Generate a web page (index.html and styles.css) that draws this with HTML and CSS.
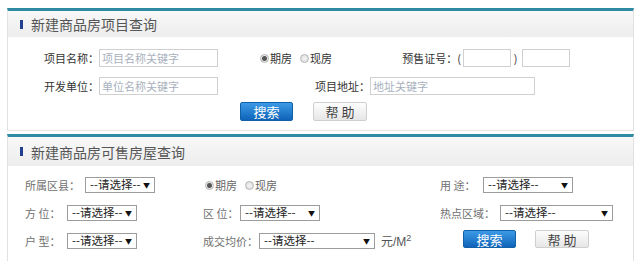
FILE: index.html
```html
<!DOCTYPE html>
<html lang="zh-CN">
<head>
    <meta charset="UTF-8">
    <title>新建商品房查询</title>
    <link rel="stylesheet" href="styles.css">
</head>
<body>
    <!-- 新建商品房项目查询 -->
    <section class="panel panel-project">
        <h2 class="panel-title"><span class="marker"></span>新建商品房项目查询</h2>
        <div class="panel-body">
            <div class="row">
                <span class="lbl lbl-a">项目名称：</span>
                <input class="txt txt-a" type="text" placeholder="项目名称关键字">
                <span class="radios radios-a">
                    <span class="radio checked"></span>期房
                    <span class="radio"></span>现房
                </span>
                <span class="lbl lbl-b">预售证号：(</span>
                <input class="txt txt-s" type="text">
                <span class="paren">)</span>
                <input class="txt txt-s" type="text">
            </div>
            <div class="row">
                <span class="lbl lbl-a">开发单位：</span>
                <input class="txt txt-a" type="text" placeholder="单位名称关键字">
                <span class="lbl lbl-c">项目地址：</span>
                <input class="txt txt-addr" type="text" placeholder="地址关键字">
            </div>
            <div class="row row-btn">
                <button class="btn btn-search">搜索</button>
                <button class="btn btn-help">帮 助</button>
            </div>
        </div>
    </section>

    <!-- 新建商品房可售房屋查询 -->
    <section class="panel panel-house">
        <h2 class="panel-title"><span class="marker"></span>新建商品房可售房屋查询</h2>
        <div class="panel-body grid">
            <div class="cell">
                <span class="glbl w60">所属区县：</span>
                <span class="sel w70">--请选择--<i>▼</i></span>
            </div>
            <div class="cell">
                <span class="radios radios-b">
                    <span class="radio checked"></span>期房
                    <span class="radio"></span>现房
                </span>
            </div>
            <div class="cell">
                <span class="glbl w43">用 途：</span>
                <span class="sel w90">--请选择--<i>▼</i></span>
            </div>

            <div class="cell">
                <span class="glbl w42">方 位：</span>
                <span class="sel w70">--请选择--<i>▼</i></span>
            </div>
            <div class="cell">
                <span class="glbl w37">区 位：</span>
                <span class="sel w80">--请选择--<i>▼</i></span>
            </div>
            <div class="cell">
                <span class="glbl w60">热点区域：</span>
                <span class="sel w113">--请选择--<i>▼</i></span>
            </div>

            <div class="cell">
                <span class="glbl w42">户 型：</span>
                <span class="sel w70">--请选择--<i>▼</i></span>
            </div>
            <div class="cell">
                <span class="glbl w56">成交均价：</span>
                <span class="sel w116">--请选择--<i>▼</i></span>
                <span class="unit">元/M<sup>2</sup></span>
            </div>
            <div class="cell">
                <button class="btn btn-search btn-2">搜索</button>
                <button class="btn btn-help btn-3">帮 助</button>
            </div>
        </div>
    </section>
</body>
</html>
```

FILE: styles.css
```css
* {
    margin: 0;
    padding: 0;
    box-sizing: border-box;
}

body {
    font-family: "Noto Sans CJK SC", "Liberation Sans", sans-serif;
    background: #fff;
    color: #333;
    width: 640px;
    overflow: hidden;
}

/* 面板 */
.panel {
    margin-left: 7px;
    width: 627px;
    border-top: 3px solid #2f8ba3;
    border-left: 1px solid #e2e2e2;
    border-right: 1px solid #e2e2e2;
}

.panel-project {
    margin-top: 8px;
    height: 123px;
    border-bottom: 1px solid #e6e6e6;
}

.panel-house {
    margin-top: 3px;
    height: 130px;
}

.panel-title {
    display: flex;
    align-items: center;
    height: 26px;
    padding-left: 12px;
    font-size: 14px;
    font-weight: normal;
    line-height: 1;
    color: #555;
    background: linear-gradient(#f8f8f8, #ededed);
}

.panel-house .panel-title {
    height: 29px;
}

.marker {
    display: inline-block;
    width: 3px;
    height: 9px;
    margin-right: 8px;
    background: #23408f;
}

/* 项目查询 */
.panel-project .panel-body {
    padding-top: 12px;
}

.row {
    display: flex;
    align-items: center;
    height: 18px;
    margin-bottom: 10px;
    font-size: 11px;
    line-height: 1;
}

.row-btn {
    height: 19px;
    margin-top: -3px;
    padding-left: 232px;
}

.lbl {
    display: inline-block;
    text-align: right;
    color: #333;
}

.lbl-a { width: 91px; }
.lbl-b { width: 121px; }
.lbl-c { width: 152px; }

.txt {
    height: 18px;
    border: 1px solid #d0d0d0;
    padding: 0 2px;
    font-family: "Noto Sans CJK SC", sans-serif;
    font-size: 11px;
    color: #333;
    outline: none;
}

.txt::placeholder {
    color: #a8b0bd;
}

.txt-a { width: 119px; }
.txt-s { width: 48px; margin-left: 2px; }
.txt-addr { width: 165px; }

.paren {
    display: inline-block;
    width: 9px;
    text-align: center;
    color: #333;
}

.radios {
    display: inline-flex;
    align-items: center;
    color: #333;
}

.radios-a {
    width: 82px;
    margin-left: 40px;
}

.radio {
    display: inline-block;
    width: 9px;
    height: 9px;
    margin: 0 1px 0 2px;
    border: 1px solid #b5b5b5;
    border-radius: 50%;
    background: radial-gradient(#f4f4f4, #d8d8d8);
}

.radios .radio:nth-of-type(2) {
    margin-left: 8px;
}

.radio.checked {
    background: radial-gradient(circle, #555 0, #555 2px, #e8e8e8 3px);
}

/* 按钮 */
.btn {
    height: 19px;
    font-family: "Noto Sans CJK SC", sans-serif;
    font-size: 13px;
    line-height: 1;
    cursor: pointer;
}

.btn-search {
    width: 53px;
    color: #fff;
    border: 1px solid #1261a8;
    border-radius: 2px;
    background: linear-gradient(#3d9ae6, #0f64b9);
}

.btn-help {
    width: 54px;
    margin-left: 20px;
    color: #444;
    border: 1px solid #cfcfcf;
    border-radius: 2px;
    background: linear-gradient(#fdfdfd, #e6e6e6);
}

/* 可售房屋查询 */
.grid {
    display: grid;
    grid-template-columns: 178px 237px 1fr;
    grid-auto-rows: 16px;
    row-gap: 12px;
    padding: 11px 0 0 17px;
    font-size: 11px;
    line-height: 1;
    color: #666;
}

.cell {
    display: flex;
    align-items: center;
}

.glbl {
    display: inline-block;
    white-space: pre;
    color: #707070;
}

.w37 { width: 37px; }
.w42 { width: 42px; }
.w43 { width: 43px; }
.w56 { width: 56px; }
.w60 { width: 60px; }

.sel {
    display: inline-flex;
    align-items: center;
    justify-content: space-between;
    height: 16px;
    padding: 0 4px 0 4px;
    border: 1px solid #9c9c9c;
    font-size: 11.5px;
    color: #222;
    background: #fff;
    white-space: nowrap;
}

.sel i {
    font-style: normal;
    font-size: 7px;
    color: #111;
}

.w70 { width: 70px; }
.w80 { width: 80px; }
.w90 { width: 90px; }
.w113 { width: 113px; }
.w116 { width: 116px; }

.radios-b {
    color: #666;
}

.unit {
    margin-left: 6px;
    font-family: "Liberation Sans", "Noto Sans CJK SC", sans-serif;
    font-size: 12px;
    color: #555;
}

.unit sup {
    font-size: 9px;
    vertical-align: 5px;
}

.btn-2 {
    height: 18px;
    margin-left: 23px;
    margin-top: -4px;
}

.btn-3 {
    height: 18px;
    margin-left: 19px;
    margin-top: -4px;
}
```
